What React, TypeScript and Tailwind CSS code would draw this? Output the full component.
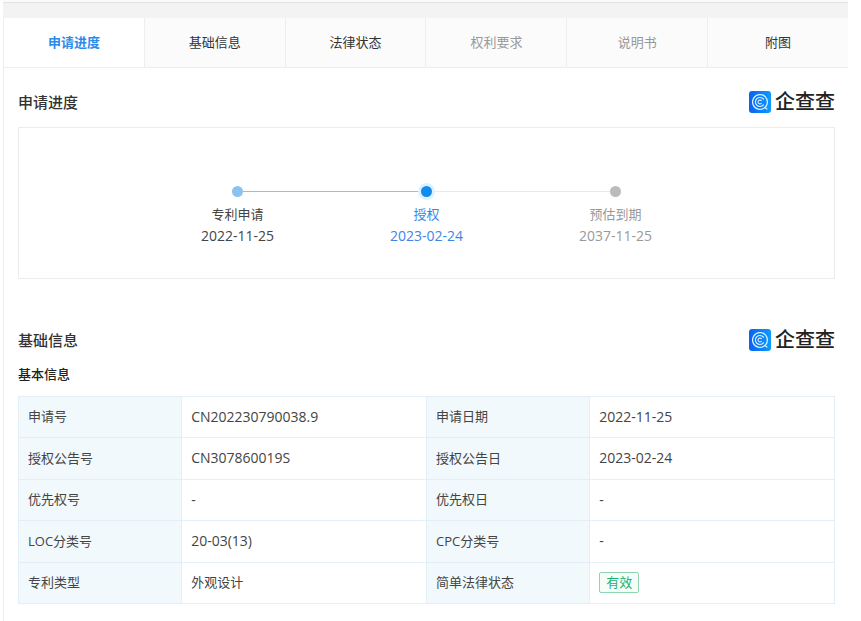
import clsx from "clsx";

interface Tab {
  label: string;
  state?: "active" | "disabled";
}

interface Step {
  label: string;
  date: string;
  text: string;
  dot: string;
  before: string;
  after: string;
}

const tabs: Tab[] = [
  { label: "申请进度", state: "active" },
  { label: "基础信息" },
  { label: "法律状态" },
  { label: "权利要求", state: "disabled" },
  { label: "说明书", state: "disabled" },
  { label: "附图" },
];

const steps: Step[] = [
  {
    label: "专利申请",
    date: "2022-11-25",
    text: "text-[#444]",
    dot: "bg-[#88c3f3]",
    before: "bg-transparent",
    after: "bg-[#88c3f3]",
  },
  {
    label: "授权",
    date: "2023-02-24",
    text: "text-[#3b86e8]",
    dot: "bg-[#128bed] ring-3 ring-[#dff1fd]",
    before: "bg-[#88c3f3]",
    after: "bg-[#eaeaea]",
  },
  {
    label: "预估到期",
    date: "2037-11-25",
    text: "text-[#999]",
    dot: "bg-[#bbb]",
    before: "bg-[#eaeaea]",
    after: "bg-transparent",
  },
];

const rows = [
  ["申请号", "CN202230790038.9", "申请日期", "2022-11-25"],
  ["授权公告号", "CN307860019S", "授权公告日", "2023-02-24"],
  ["优先权号", "-", "优先权日", "-"],
  ["LOC分类号", "20-03(13)", "CPC分类号", "-"],
  ["专利类型", "外观设计", "简单法律状态", "有效"],
];

function Logo() {
  return (
    <div className="flex items-center gap-1">
      <svg viewBox="0 0 22 22" className="size-[22px]" fill="none" aria-hidden="true">
        <defs>
          <linearGradient id="logo-bg" x1="0" y1="0" x2="1" y2="0">
            <stop offset="0" stopColor="#0a62f0" />
            <stop offset="1" stopColor="#0c9bfb" />
          </linearGradient>
        </defs>
        <rect width="22" height="22" rx="3" fill="url(#logo-bg)" />
        <g stroke="#d9efff" strokeLinecap="round">
          <path d="M15.8 16.6A7.4 7.4 0 1 1 18.3 12.2Q17.9 15.3 15.8 16.6L18 18" strokeWidth="1.3" />
          <path d="M14.4 13.8A4.5 4.5 0 1 1 14.4 8.2" strokeWidth="1.2" />
          <path d="M12.3 12.3A1.9 1.9 0 1 1 12.3 9.7" strokeWidth="1.1" />
        </g>
      </svg>
      <span className="text-xl leading-6 font-medium text-[#222]">企查查</span>
    </div>
  );
}

function SectionHeader({ title }: { title: string }) {
  return (
    <div className="flex items-center justify-between">
      <h2 className="text-[15px] leading-6 font-medium text-[#333]">{title}</h2>
      <Logo />
    </div>
  );
}

function Value({ value }: { value: string }) {
  if (value === "有效") {
    return (
      <span className="block w-fit rounded-xs border border-[#8fd5b4] bg-[#f6fdf9] px-1.5 leading-[19px] text-[#1fb06b]">
        {value}
      </span>
    );
  }
  // codes and dates are set one size larger than Chinese text
  const isCode = /^[\w.()-]+$/.test(value);
  return <span className={clsx(isCode && "text-sm")}>{value}</span>;
}

export default function App() {
  return (
    <div className="min-h-screen bg-white pr-[13px] pl-[3px] font-['Open_Sans','Noto_Sans_CJK_SC',sans-serif] text-[13px] text-[#444]">
      <div className="h-0.5 bg-[#fafafa]" />
      <div className="h-4 border-t border-[#e4e4e4] bg-[#f3f3f3]" />
      <main className="min-h-[603px] border-l border-[#eee]">
        <nav className="flex h-[50px] border-b border-[#eee]">
          {tabs.map((tab) => (
            <button
              key={tab.label}
              type="button"
              disabled={tab.state === "disabled"}
              className={clsx(
                "flex-1 border-r border-[#eee] last:border-r-0",
                tab.state === "active" && "bg-white font-bold text-[#2a8bea]",
                tab.state === "disabled" && "bg-[#fbfbfb] text-[#999]",
                !tab.state && "bg-[#fbfbfb] text-[#333]"
              )}
            >
              {tab.label}
            </button>
          ))}
        </nav>

        <section className="pt-[22px] pr-[13px] pl-3.5">
          <SectionHeader title="申请进度" />
          <div className="mt-[13px] flex h-[152px] justify-center border border-[#e9edef] pt-[58px]">
            <ol className="grid w-[567px] grid-cols-3">
              {steps.map((step) => (
                <li key={step.label} className={clsx("text-center", step.text)}>
                  <div className="mb-1.5 flex items-center">
                    <span className={clsx("h-px flex-1", step.before)} />
                    <span className={clsx("z-10 size-[11px] rounded-full", step.dot)} />
                    <span className={clsx("h-px flex-1", step.after)} />
                  </div>
                  <p className="leading-[22px]">{step.label}</p>
                  <p className="text-sm leading-[22px]">{step.date}</p>
                </li>
              ))}
            </ol>
          </div>
        </section>

        <section className="pt-[49px] pr-[13px] pl-3.5">
          <SectionHeader title="基础信息" />
          <h3 className="mt-3 leading-5 font-medium text-[#222]">基本信息</h3>
          <table className="mt-3 h-52 w-full table-fixed border-collapse">
            <colgroup>
              <col className="w-1/5" />
              <col className="w-3/10" />
              <col className="w-1/5" />
              <col className="w-3/10" />
            </colgroup>
            <tbody>
              {rows.map((row) => (
                <tr key={row[0]} className="h-[41px]">
                  {row.map((cell, i) =>
                    i % 2 === 0 ? (
                      <th
                        key={i}
                        scope="row"
                        className="border border-[#e4eef6] bg-[#f2f9fc] px-[9px] text-left font-normal"
                      >
                        {cell}
                      </th>
                    ) : (
                      <td key={i} className="border border-[#e4eef6] px-[9px]">
                        <Value value={cell} />
                      </td>
                    )
                  )}
                </tr>
              ))}
            </tbody>
          </table>
        </section>
      </main>
    </div>
  );
}
